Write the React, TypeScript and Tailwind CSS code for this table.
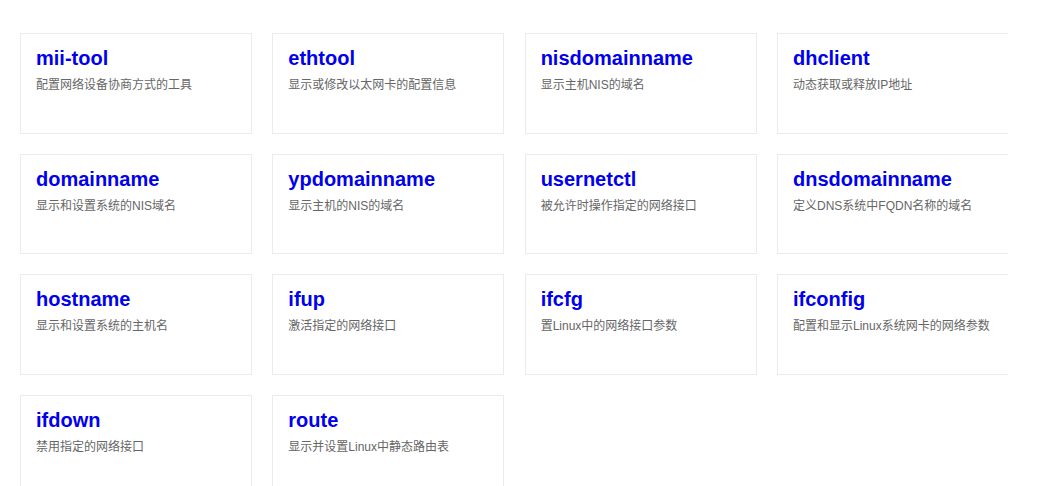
const commands = [
  { name: "mii-tool", desc: "配置网络设备协商方式的工具" },
  { name: "ethtool", desc: "显示或修改以太网卡的配置信息" },
  { name: "nisdomainname", desc: "显示主机NIS的域名" },
  { name: "dhclient", desc: "动态获取或释放IP地址" },
  { name: "domainname", desc: "显示和设置系统的NIS域名" },
  { name: "ypdomainname", desc: "显示主机的NIS的域名" },
  { name: "usernetctl", desc: "被允许时操作指定的网络接口" },
  { name: "dnsdomainname", desc: "定义DNS系统中FQDN名称的域名" },
  { name: "hostname", desc: "显示和设置系统的主机名" },
  { name: "ifup", desc: "激活指定的网络接口" },
  { name: "ifcfg", desc: "置Linux中的网络接口参数" },
  { name: "ifconfig", desc: "配置和显示Linux系统网卡的网络参数" },
  { name: "ifdown", desc: "禁用指定的网络接口" },
  { name: "route", desc: "显示并设置Linux中静态路由表" },
];

export default function App() {
  return (
    <div
      className="w-[1042px] h-[486px] bg-white overflow-hidden"
      style={{ fontFamily: '"Liberation Sans", Arial, "Noto Sans CJK SC", sans-serif' }}
    >
      <div className="w-[1008px] overflow-hidden pl-5 pt-[33px]">
        <div className="grid grid-cols-[repeat(4,232px)] gap-x-[20.33px] gap-y-5 w-max">
          {commands.map((c) => (
            <div key={c.name} className="h-[100.67px] border border-[#ebebeb] bg-white px-[15px] pt-[11px]">
              <a href="#" className="block text-[20px] leading-[26px] font-bold text-[#0000ee]">
                {c.name}
              </a>
              <p className="mt-[5px] text-[12px] leading-[18px] text-[#666]">{c.desc}</p>
            </div>
          ))}
        </div>
      </div>
    </div>
  );
}
